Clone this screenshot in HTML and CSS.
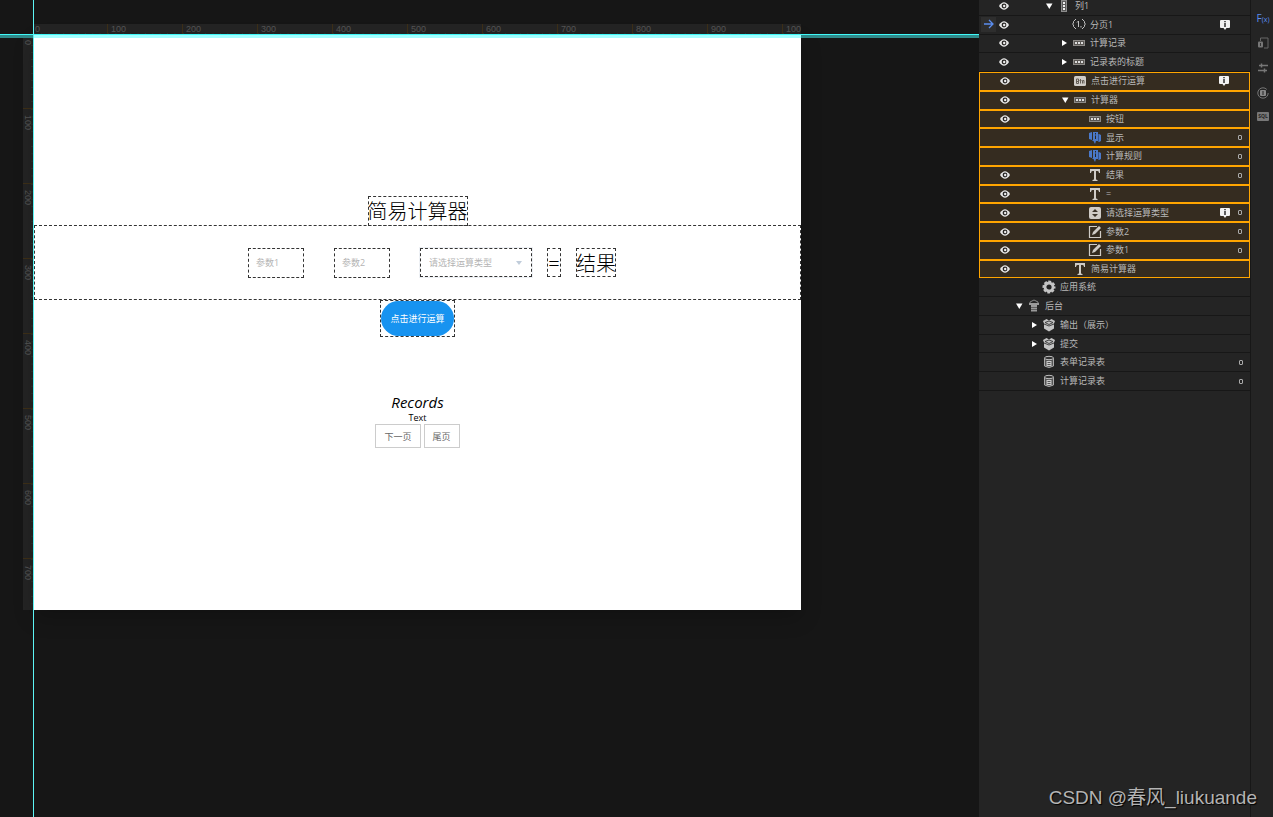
FILE: index.html
```html
<!DOCTYPE html>
<html lang="zh-CN">
<head>
<meta charset="utf-8">
<title>简易计算器</title>
<link rel="stylesheet" href="styles.css">
</head>
<body>
<svg class="defs" aria-hidden="true">
  <symbol id="eye" viewBox="0 0 10 8"><path d="M0 4Q5-3.500 10 4Q5 11.500 0 4Z" fill="#e8e8e8"/><circle cx="5" cy="4" r="2.400" fill="#282624"/><circle cx="5.200" cy="4" r="1.200" fill="#eee"/></symbol>
  <symbol id="down" viewBox="0 0 8 8"><path d="M1 1.500H7.500L4.300 7Z" fill="#fff"/></symbol>
  <symbol id="right" viewBox="0 0 8 8"><path d="M2 1L7 4L2 7Z" fill="#fff"/></symbol>
  <symbol id="col" viewBox="0 0 14 14"><rect x="4.500" y="1.500" width="5" height="11" fill="#5a5a5a" stroke="#8c8c8c"/><path d="M6 3h2v2H6zM6 6h2v2H6zM6 9h2v2H6z" fill="#eee"/></symbol>
  <symbol id="row" viewBox="0 0 14 14"><rect x="1.500" y="4.500" width="11" height="5" fill="#5a5754" stroke="#8c8a87"/><path d="M3 6h2v2H3zM6 6h2v2H6zM9 6h2v2H9z" fill="#ddd"/></symbol>
  <symbol id="page" viewBox="0 0 14 14"><path d="M4 1L1.500 3.500V5L.500 6L1.500 7V8.500L4 11M10 1L12.500 3.500V5L13.500 6L12.500 7V8.500L10 11M5 4.500L6.500 3V9M9 8v1.500" fill="none" stroke="#c0c0c0"/></symbol>
  <symbol id="btn" viewBox="0 0 14 14"><rect x="1" y="2" width="12" height="10" rx="1.500" fill="#d0cdc8"/><path d="M3.500 5v4.500h2V5zM3.500 7.500h2M7.500 5v4.500M6.500 6.500h2M9.500 9.500v-3h1.500v3" fill="none" stroke="#655f57"/></symbol>
  <symbol id="info" viewBox="0 0 14 14"><path d="M1 2l3-1v8l-3-1zM5 1h5v9H8l-1 3L5.500 10H5zM11 3l2 1v6l-2 1z" fill="#4a78c8"/><path d="M4 9h1v1H4zM10 3h1v8h-1z" fill="#35528a"/><path d="M7.500 2v1.500M7.500 4.500V8" stroke="#2a2520"/></symbol>
  <symbol id="text" viewBox="0 0 14 14"><path d="M2 1h10v4h-1q0-2-1.500-2H8v8q0 1 1.500 1v1h-5v-1Q6 12 6 11V3H4.500Q3 3 3 5H2z" fill="#cfcbc6"/></symbol>
  <symbol id="select" viewBox="0 0 14 14"><rect x="1" y="1" width="12" height="12" rx="2" fill="#cfcbc6"/><path d="M4 6L7 3L10 6ZM4 8L7 11L10 8Z" fill="#3a3228"/></symbol>
  <symbol id="edit" viewBox="0 0 14 14"><path d="M9 1.500H1.500V12.500H12.500V6" fill="none" stroke="#cfcbc6" stroke-width="1.200"/><path d="M4 10l1-3L11 1l2 2L7 9z" fill="#cfcbc6"/></symbol>
  <symbol id="gear" viewBox="0 0 14 14"><circle cx="7" cy="7" r="4" fill="none" stroke="#c4c4c4" stroke-width="2.800"/><circle cx="7" cy="7" r="5.600" fill="none" stroke="#c4c4c4" stroke-width="1.800" stroke-dasharray="2.900 1.500" stroke-dashoffset="1.400"/></symbol>
  <symbol id="server" viewBox="0 0 14 14"><path d="M3 5V3l4-2l4 2v2" fill="none" stroke="#888"/><path d="M2 4h10v2H2zM4 6h6v2.500H4zM4 9h6v1.500H4zM4 11h6v1.500H4z" fill="#999"/></symbol>
  <symbol id="box" viewBox="0 0 14 14"><path d="M1 3l3.500-2L7 2.500L9.500 1L13 3l-1 2.500v5L7 13.500L2 10.500v-5z" fill="#c4c4c4"/><path d="M3 4.500L7 3l4 1.500L7 6.500zM2 6l5 2l5-2" fill="none" stroke="#333" stroke-width=".9"/></symbol>
  <symbol id="db" viewBox="0 0 14 14"><path d="M2.500 3v8q4.500 3 9 0V3" fill="#555" stroke="#aaa"/><ellipse cx="7" cy="3" rx="4.500" ry="1.700" fill="#333" stroke="#bbb"/><rect x="5" y="6.500" width="4" height="4" fill="none" stroke="#ccc"/><path d="M5 8.500h4" stroke="#ccc"/></symbol>
  <symbol id="tip" viewBox="0 0 12 12"><path d="M2 1h8q1 0 1 1v6q0 1-1 1H7.500L6 11L4.500 9H2Q1 9 1 8V2Q1 1 2 1z" fill="#f2f2f2"/><path d="M6 2v1.300M6 4v4" stroke="#222" stroke-width="1.400"/></symbol>
</svg>
<div class="app">
  <main class="stage">
    <div class="ruler ruler-x" aria-hidden="true"><span>0</span><span>100</span><span>200</span><span>300</span><span>400</span><span>500</span><span>600</span><span>700</span><span>800</span><span>900</span><span>1000</span></div>
    <div class="ruler ruler-y" aria-hidden="true"><span>0</span><span>100</span><span>200</span><span>300</span><span>400</span><span>500</span><span>600</span><span>700</span></div>
    <div class="artboard">
      <h1 class="title">简易计算器</h1>
      <form class="calc picked">
        <input class="field picked" aria-label="参数1" placeholder="参数1">
        <input class="field picked" aria-label="参数2" placeholder="参数2">
        <div class="choice picked">
          <select aria-label="请选择运算类型"><option>请选择运算类型</option></select>
          <svg viewBox="0 0 8 6" aria-hidden="true"><path d="M1 1h6L4 5z" fill="#c0ccda"/></svg>
        </div>
        <span class="equals">=</span>
        <output class="result">结果</output>
      </form>
      <div class="run-wrap picked"><button class="run" type="button">点击进行运算</button></div>
      <h2 class="records">Records</h2>
      <p class="caption">Text</p>
      <div class="pager"><button type="button">下一页</button><button type="button">尾页</button></div>
    </div>
    <div class="guide-x"></div>
    <div class="guide-y"></div>
  </main>
  <aside class="panel">
    <ul class="tree">
      <li class="l2"><svg class="eye"><use href="#eye"/></svg><svg class="caret"><use href="#down"/></svg><svg class="icon"><use href="#col"/></svg><span>列1</span></li>
      <li class="l3"><i class="current"><svg viewBox="0 0 10 10"><path d="M0 5H9M5 1L9 5L5 9" fill="none" stroke="#5b8def" stroke-width="1.300"/></svg></i><svg class="eye"><use href="#eye"/></svg><svg class="caret"></svg><svg class="icon"><use href="#page"/></svg><span>分页1</span><svg class="tip"><use href="#tip"/></svg></li>
      <li class="l3"><svg class="eye"><use href="#eye"/></svg><svg class="caret"><use href="#right"/></svg><svg class="icon"><use href="#row"/></svg><span>计算记录</span></li>
      <li class="l3"><svg class="eye"><use href="#eye"/></svg><svg class="caret"><use href="#right"/></svg><svg class="icon"><use href="#row"/></svg><span>记录表的标题</span></li>
      <li class="l3 on"><svg class="eye"><use href="#eye"/></svg><svg class="caret"></svg><svg class="icon"><use href="#btn"/></svg><span>点击进行运算</span><svg class="tip"><use href="#tip"/></svg></li>
      <li class="l3 on"><svg class="eye"><use href="#eye"/></svg><svg class="caret"><use href="#down"/></svg><svg class="icon"><use href="#row"/></svg><span>计算器</span></li>
      <li class="l4 on"><svg class="eye"><use href="#eye"/></svg><svg class="caret"></svg><svg class="icon"><use href="#row"/></svg><span>按钮</span></li>
      <li class="l4 on"><svg class="eye"></svg><svg class="caret"></svg><svg class="icon"><use href="#info"/></svg><span>显示</span><b class="dot"></b></li>
      <li class="l4 on"><svg class="eye"></svg><svg class="caret"></svg><svg class="icon"><use href="#info"/></svg><span>计算规则</span><b class="dot"></b></li>
      <li class="l4 on"><svg class="eye"><use href="#eye"/></svg><svg class="caret"></svg><svg class="icon"><use href="#text"/></svg><span>结果</span><b class="dot"></b></li>
      <li class="l4 on"><svg class="eye"><use href="#eye"/></svg><svg class="caret"></svg><svg class="icon"><use href="#text"/></svg><span>=</span></li>
      <li class="l4 on"><svg class="eye"><use href="#eye"/></svg><svg class="caret"></svg><svg class="icon"><use href="#select"/></svg><span>请选择运算类型</span><svg class="tip"><use href="#tip"/></svg><b class="dot"></b></li>
      <li class="l4 on"><svg class="eye"><use href="#eye"/></svg><svg class="caret"></svg><svg class="icon"><use href="#edit"/></svg><span>参数2</span><b class="dot"></b></li>
      <li class="l4 on"><svg class="eye"><use href="#eye"/></svg><svg class="caret"></svg><svg class="icon"><use href="#edit"/></svg><span>参数1</span><b class="dot"></b></li>
      <li class="l3 on"><svg class="eye"><use href="#eye"/></svg><svg class="caret"></svg><svg class="icon"><use href="#text"/></svg><span>简易计算器</span></li>
      <li class="l1"><svg class="eye"></svg><svg class="caret"></svg><svg class="icon"><use href="#gear"/></svg><span>应用系统</span></li>
      <li class="l0"><svg class="eye"></svg><svg class="caret"><use href="#down"/></svg><svg class="icon"><use href="#server"/></svg><span>后台</span></li>
      <li class="l1"><svg class="eye"></svg><svg class="caret"><use href="#right"/></svg><svg class="icon"><use href="#box"/></svg><span>输出（展示）</span></li>
      <li class="l1"><svg class="eye"></svg><svg class="caret"><use href="#right"/></svg><svg class="icon"><use href="#box"/></svg><span>提交</span></li>
      <li class="l1"><svg class="eye"></svg><svg class="caret"></svg><svg class="icon"><use href="#db"/></svg><span>表单记录表</span><b class="dot"></b></li>
      <li class="l1"><svg class="eye"></svg><svg class="caret"></svg><svg class="icon"><use href="#db"/></svg><span>计算记录表</span><b class="dot"></b></li>
    </ul>
  </aside>
  <nav class="rail">
    <button type="button" class="fx" aria-label="函数">F<small>(x)</small></button>
    <button type="button" aria-label="页面"><svg viewBox="0 0 12 12"><path d="M3.500 4V1H11v10H7" fill="none" stroke="#666"/><rect x="1" y="4.500" width="5" height="6" rx="1" fill="#777"/><path d="M3.500 6v3" stroke="#333"/></svg></button>
    <button type="button" aria-label="交换"><svg viewBox="0 0 12 12"><path d="M2 3.500h9M4.500 1.500v4M1 8.500h9M7.500 6.500v4" fill="none" stroke="#777" stroke-width="1.500"/></svg></button>
    <button type="button" aria-label="历史"><svg viewBox="0 0 12 12"><circle cx="6" cy="6" r="5.200" fill="none" stroke="#777" stroke-dasharray="28 5"/><rect x="3" y="3" width="6" height="6" rx="1" fill="#888"/><path d="M6 4v4" stroke="#222"/></svg></button>
    <button type="button" aria-label="SQL" class="sql">SQL</button>
  </nav>
  <div class="mark">CSDN @春风_liukuande</div>
</div>
</body>
</html>
```
FILE: styles.css
```css
* { box-sizing: border-box; }
body {
  margin: 0;
  background: #161616;
  font-family: "Open Sans", "Noto Sans CJK SC", sans-serif;
  font-size: 9px;
  line-height: 12px;
}
h1, h2, p, ul { margin: 0; padding: 0; font-weight: 400; }
button, input, select { font: inherit; padding: 0; }
.defs { position: absolute; width: 0; height: 0; }

.app {
  position: relative;
  display: grid;
  grid-template-columns: 1fr 272px 22px;
  grid-template-rows: minmax(0, 1fr);
  height: 100vh;
}

/* canvas */
.stage {
  position: relative;
  display: grid;
  grid-template-columns: 23px 11px minmax(0, 1fr) 178px;
  grid-template-rows: 24px 11px minmax(0, 1fr) 207px;
}
.ruler {
  display: flex;
  overflow: hidden;
  background-color: #242424;
  color: #555;
  font-family: "Liberation Sans", sans-serif;
  line-height: 11px;
}
.ruler span { flex: none; }
.ruler-x { grid-area: 2 / 3; }
.ruler-x span {
  width: 75px;
  padding-left: 3px;
  border-right: 1px solid #3d2f17;
  background: linear-gradient(90deg, #303030 1px, transparent 1px) 0 100% / 10% 2px repeat-x;
}
.ruler-x span:first-child { width: 74px; padding-left: 1px; }
.ruler-y {
  grid-area: 3 / 2;
  flex-direction: column;
  width: 10px;
  margin-top: 3px;
}
.ruler-y span {
  height: 75px;
  padding-top: 6px;
  border-bottom: 1px solid #3d2f17;
  writing-mode: vertical-rl;
  line-height: 10px;
  background: linear-gradient(#303030 1px, transparent 1px) 100% 0 / 2px 10% repeat-y;
}
.ruler-y span:first-child { height: 71px; padding-top: 2px; }
.guide-x {
  position: absolute;
  top: 34px;
  left: 0;
  right: 0;
  height: 4px;
  border-top: 1px solid #40f8f8;
  background: rgba(72, 255, 255, .5);
  background-clip: padding-box;
}
.guide-y {
  position: absolute;
  top: 0;
  bottom: 0;
  left: 33px;
  width: 1px;
  background: #5cf4f4;
}

.artboard {
  grid-area: 3 / 3;
  display: flex;
  flex-direction: column;
  align-items: center;
  padding-top: 161px;
  background: #fff;
  color: #000;
  box-shadow: 0 8px 20px rgba(0, 0, 0, .2);
}
.picked { border: 1px dashed #333; }
.title, .equals, .result {
  outline: 1px dashed #333;
  outline-offset: -1px;
  font-size: 20px;
  font-weight: 300;
  line-height: 32px;
  white-space: nowrap;
}
.title { height: 30px; }
.calc {
  display: flex;
  align-items: center;
  justify-content: center;
  align-self: stretch;
  height: 75px;
  margin-top: -1px;
  padding-left: 29px;
}
.field {
  width: 56px;
  height: 30px;
  margin-right: 30px;
  padding-left: 7px;
  background: #fff;
}
.field::placeholder { color: #b4b4b4; opacity: 1; }
.choice {
  display: flex;
  align-items: center;
  width: 112px;
  height: 29px;
  padding: 0 8px;
  outline: 1px solid #eef1f5;
}
.choice select {
  flex: 1;
  appearance: none;
  border: 0;
  background: none;
  color: #b4b4b4;
}
.choice svg { width: 8px; height: 6px; }
.equals, .result {
  height: 29px;
  margin-left: 15px;
}
.equals { width: 14px; text-align: center; }
.run {
  display: block;
  width: 73px;
  height: 35px;
  border: 0;
  border-radius: 18px;
  background: #1793f0;
  color: #fff;
}
.records {
  margin-top: 55px;
  font-size: 15px;
  font-style: italic;
  line-height: 20px;
}
.caption { line-height: 12px; }
.pager { display: flex; gap: 3px; }
.pager button {
  height: 24px;
  padding: 2px 8px 0;
  border: 1px solid #ccc;
  background: #fff;
  color: #666;
}

/* tree */
.panel {
  overflow: hidden;
  border-right: 1px solid #171717;
  background: #242424;
}
.tree {
  display: grid;
  grid-auto-rows: 1fr;
  height: 394px;
  margin-top: -3px;
  list-style: none;
  color: #b8b8b8;
}
.tree li {
  position: relative;
  display: flex;
  align-items: center;
  min-height: 0;
  padding-left: 20px;
  border-bottom: 1px solid #171717;
  white-space: nowrap;
}
.tree .on {
  border: 1px solid #ffa500;
  background: #352c20;
}
.tree span { flex: 1; }
.eye { width: 10px; height: 8px; }
.caret { width: 8px; height: 8px; margin: 0 4px 0 6px; }
.l1 .caret { margin-left: 21px; }
.l2 .caret { margin-left: 36px; }
.l3 .caret { margin-left: 51px; }
.l4 .caret { margin-left: 66px; }
.icon { width: 14px; height: 14px; margin-right: 4px; }
.tip { width: 12px; height: 12px; margin-right: 19px; }
.dot {
  width: 4px;
  height: 5px;
  margin-right: 7px;
  border: 1px solid #aaa;
  border-radius: 1px;
}
.tip + .dot { margin-left: -12px; }
.current {
  position: absolute;
  left: 2px;
  top: 1px;
  display: grid;
  place-items: center;
  width: 15px;
  height: 15px;
  background: #2e2e2e;
}
.current svg { width: 10px; height: 10px; }

/* rail */
.rail {
  display: flex;
  flex-direction: column;
  align-items: center;
  gap: 13px;
  padding: 12px 0 0 2px;
  background: #242424;
}
.rail button {
  display: block;
  height: 12px;
  border: 0;
  background: none;
  color: #777;
}
.rail svg { display: block; width: 12px; height: 12px; }
.rail .fx { color: #5b8def; font-size: 10px; }
.rail small { font-size: 7px; }
.rail .sql {
  height: 9px;
  padding: 0 1px;
  border-radius: 1px;
  background: #777;
  color: #242424;
  font-size: 5px;
  font-weight: 700;
  line-height: 9px;
}

.mark {
  position: absolute;
  right: 16px;
  bottom: 6px;
  color: #b4b4b4;
  font-family: "Liberation Sans", "Noto Sans CJK SC", sans-serif;
  font-size: 19px;
  line-height: 26px;
  text-shadow: 1px 1px 1px #000;
}
```
